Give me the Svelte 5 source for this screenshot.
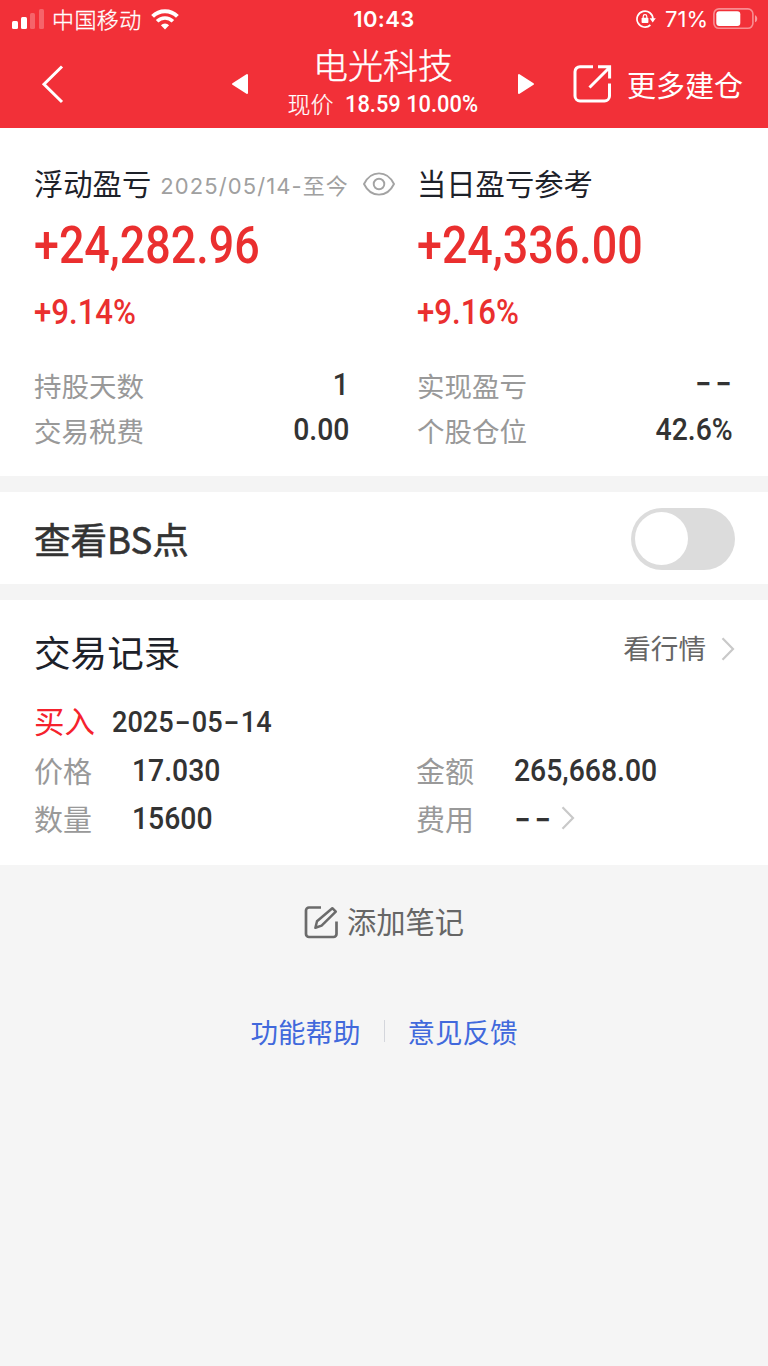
<script lang="ts">
  interface Summary {
    title: string;
    range?: string;
    amount: string;
    percent: string;
    rows: { label: string; value: string }[];
  }

  const summaries: Summary[] = [
    {
      title: '浮动盈亏',
      range: '2025/05/14-至今',
      amount: '+24,282.96',
      percent: '+9.14%',
      rows: [
        { label: '持股天数', value: '1' },
        { label: '交易税费', value: '0.00' }
      ]
    },
    {
      title: '当日盈亏参考',
      amount: '+24,336.00',
      percent: '+9.16%',
      rows: [
        { label: '实现盈亏', value: '--' },
        { label: '个股仓位', value: '42.6%' }
      ]
    }
  ];

  const trade = {
    side: '买入',
    date: ['2025', '05', '14'],
    fields: [
      { label: '价格', value: '17.030' },
      { label: '金额', value: '265,668.00' },
      { label: '数量', value: '15600' },
      { label: '费用', value: '--', link: true }
    ]
  };

  let showPoints = $state(false);
</script>

<div class="page">
  <header>
    <div class="status">
      <div class="carrier">
        <svg width="32" height="20" viewBox="0 0 32 20" fill="#fff">
          <rect x="0" y="12" width="6" height="8" rx="1.5" />
          <rect x="9" y="8" width="6" height="12" rx="1.5" />
          <rect x="18" y="4" width="5" height="16" rx="1.5" opacity=".25" />
          <rect x="27" y="0" width="5" height="20" rx="1.5" opacity=".25" />
        </svg>
        <span>中国移动</span>
        <svg class="wifi" width="28" height="21" viewBox="0 0 28 21" fill="none" stroke="#fff" stroke-width="4">
          <path d="M1.6 7.4a17.6 17.6 0 0 1 24.8 0" />
          <path d="M6.1 12.3a11.2 11.2 0 0 1 15.8 0" stroke-width="3.6" />
          <path d="M14 20.5l-4.1-4.2a5.8 5.8 0 0 1 8.2 0z" fill="#fff" stroke="none" />
        </svg>
      </div>
      <div class="clock">10:43</div>
      <div class="power">
        <svg width="20" height="18" viewBox="0 0 20 18" fill="none" stroke="#fff">
          <path d="M14.4 15A8 8 0 1 1 17 9" stroke-width="1.7" />
          <path d="M13.6 8.2h6.2l-3.1 4.2z" fill="#fff" stroke="none" />
          <rect x="5.6" y="7.8" width="6.8" height="5.2" rx=".8" fill="#fff" stroke="none" />
          <path d="M7.2 8V6.4a1.8 1.8 0 0 1 3.6 0V8" stroke-width="1.2" />
        </svg>
        <span>71%</span>
        <svg width="45" height="22" viewBox="0 0 45 22">
          <rect x=".9" y=".9" width="39" height="19.4" rx="5" fill="none" stroke="#fff" stroke-width="1.6" opacity=".45" />
          <rect x="3.3" y="3.3" width="24" height="14.6" rx="3" fill="#fff" />
          <path d="M42 7.2c3 1 3 6 0 7z" fill="#fff" opacity=".5" />
        </svg>
      </div>
    </div>

    <div class="nav">
      <svg class="back" width="24" height="40" viewBox="0 0 24 40" fill="none" stroke="#fff" stroke-width="3">
        <path d="M21 2.5L3 20.3 21 38" />
      </svg>
      <div class="stock">
        <svg width="18" height="22" viewBox="0 0 18 22"><path d="M2 11L16 2v18z" fill="#fff" stroke="#fff" stroke-width="2" stroke-linejoin="round" /></svg>
        <div class="quote">
          <h1>电光科技</h1>
          <p><span>现价</span><span class="num">18.59 10.00%</span></p>
        </div>
        <svg width="18" height="22" viewBox="0 0 18 22"><path d="M16 11L2 2v18z" fill="#fff" stroke="#fff" stroke-width="2" stroke-linejoin="round" /></svg>
      </div>
      <div class="more">
        <svg width="40" height="40" viewBox="0 0 40 40" fill="none" stroke="#fff" stroke-width="3">
          <path d="M20 2.7H7a5 5 0 0 0-5 5V32a5 5 0 0 0 5 5h24.5a5 5 0 0 0 5-5V19.5" />
          <path d="M16.5 23.5L36 4M25 2.7h11.6V14.5" />
        </svg>
        <span>更多建仓</span>
      </div>
    </div>
  </header>

  <section class="profit">
    {#each summaries as item}
      <div class="summary">
        <div class="title">
          <h2>{item.title}</h2>
          {#if item.range}
            <span class="range">{item.range}</span>
            <svg width="32" height="24" viewBox="0 0 32 24" fill="none" stroke="#a3a3a3" stroke-width="1.9">
              <path d="M1 12C8-2.2 24-2.2 31 12 24 26.2 8 26.2 1 12z" />
              <circle cx="16" cy="12" r="5.3" />
            </svg>
          {/if}
        </div>
        <div class="amount num">{item.amount}</div>
        <div class="percent num">{item.percent}</div>
        {#each item.rows as row}
          <div class="row">
            <span class="label">{row.label}</span>
            <span class="value num" class:dash={row.value === '--'}>{row.value}</span>
          </div>
        {/each}
      </div>
    {/each}
  </section>

  <section class="points">
    <h2>查看BS点</h2>
    <button class="switch" class:on={showPoints} aria-label="查看BS点" onclick={() => (showPoints = !showPoints)}>
      <span class="knob"></span>
    </button>
  </section>

  <section class="records">
    <div class="records-head">
      <h2>交易记录</h2>
      <div class="market">
        <span>看行情</span>
        {@render chevron()}
      </div>
    </div>
    <div class="deal">
      <span class="side">{trade.side}</span>
      <span class="date num">{#each trade.date as part, i}{#if i}<i>-</i>{/if}{part}{/each}</span>
    </div>
    <div class="fields">
      {#each trade.fields as field}
        <div class="field">
          <span class="label">{field.label}</span>
          <span class="value num" class:dash={field.value === '--'}>{field.value}</span>
          {#if field.link}
            {@render chevron()}
          {/if}
        </div>
      {/each}
    </div>
  </section>

  <div class="note">
    <svg width="34" height="34" viewBox="0 0 34 34" fill="none" stroke="#6b6b6b" stroke-width="2.7" stroke-linejoin="round">
      <path d="M17 2.5H5a3 3 0 0 0-3 3V29a3 3 0 0 0 3 3h24.5a3 3 0 0 0 3-3V16.500" />
      <path d="M28.300 3.200l3.500 3.500L17.600 20.600l-6.200 2.200 1.600-6.600z" stroke-width="2.5" />
    </svg>
    <span>添加笔记</span>
  </div>

  <footer>
    <span>功能帮助</span>
    <span class="divider"></span>
    <span>意见反馈</span>
  </footer>
</div>

{#snippet chevron()}
  <svg class="chevron" width="14" height="24" viewBox="0 0 14 24" fill="none" stroke="#c9c9c9" stroke-width="2.2">
    <path d="M1.5 1.2L12 12 1.5 22.8" />
  </svg>
{/snippet}

<style>
  :global(body) {
    background: #f5f5f5;
  }

  .page {
    width: 768px;
    min-height: 1366px;
    font-family: 'Noto Sans CJK SC', sans-serif;
    color: #333;
    background: #f5f5f5;
    overflow: hidden;
  }

  h1, h2, p {
    margin: 0;
    font-weight: 400;
  }

  span, h1, h2, p {
    white-space: nowrap;
  }

  svg {
    flex: none;
    display: block;
  }

  /* condensed figures, narrowed from their left edge */
  .num {
    font-family: Roboto, sans-serif;
    font-weight: 500;
    transform: scaleX(0.9);
    transform-origin: left center;
  }

  header {
    height: 128px;
    color: #fff;
    background: #f23038;
  }

  .status {
    display: grid;
    grid-template-columns: 1fr auto 1fr;
    align-items: center;
    height: 38px;
    padding: 0 10px 0 12px;
    font-size: 22px;
    line-height: 38px;
  }

  .carrier,
  .power {
    display: flex;
    align-items: center;
    height: 38px;
  }

  .carrier span {
    margin-left: 8px;
    padding-bottom: 2px;
    letter-spacing: 0.4px;
    font-weight: 300;
    -webkit-text-stroke: 0.3px #fff;
  }

  .wifi {
    margin-left: 9px;
  }

  .clock {
    margin-right: 2px;
    font-family: Inter, sans-serif;
    font-weight: 600;
    letter-spacing: 0.4px;
  }

  .power {
    justify-content: flex-end;
    font-family: Inter, sans-serif;
  }

  .power span {
    margin: 0 5px 0 9px;
  }

  .nav {
    display: grid;
    grid-template-columns: 200px 1fr 200px;
    align-items: center;
    height: 92px;
    padding: 0 25px 0 41px;
  }

  .stock {
    display: flex;
    align-items: center;
    justify-content: space-between;
    margin: 0 8px 0 -10px;
  }

  .quote {
    padding-bottom: 4px;
    text-align: center;
  }

  h1 {
    font-size: 35px;
    font-weight: 300;
    line-height: 44px;
    -webkit-text-stroke: 0.4px #fff;
  }

  .quote p {
    display: flex;
    justify-content: center;
    font-size: 23px;
    font-weight: 300;
    line-height: 34px;
    -webkit-text-stroke: 0.2px #fff;
  }

  .quote .num {
    margin: 0 -7px 0 12px;
    padding-top: 2px;
    transform: scaleX(0.95);
    -webkit-text-stroke: 0;
  }

  .more {
    display: flex;
    align-items: center;
    justify-content: flex-end;
    gap: 14px;
    font-size: 29px;
  }

  .more span {
    padding-bottom: 1px;
  }

  .profit {
    display: grid;
    grid-template-columns: 383px 1fr;
    height: 348px;
    padding: 0 35px 0 34px;
    box-sizing: border-box;
    background: #fff;
  }

  .summary {
    padding-top: 34px;
  }

  .title {
    display: flex;
    align-items: center;
    height: 44px;
    color: #1d2129;
  }

  .title h2 {
    padding-bottom: 4px;
    font-size: 29.3px;
  }

  .range {
    margin: 0 14px 0 9px;
    font-family: Inter, 'Noto Sans CJK SC', sans-serif;
    font-size: 22px;
    letter-spacing: 1.1px;
    color: #a0a0a0;
  }

  .amount {
    height: 76px;
    font-size: 52px;
    line-height: 80px;
    color: #ea2f2f;
    transform: scaleX(0.862);
  }

  .percent {
    height: 80px;
    font-size: 35px;
    line-height: 62px;
    color: #ea2f2f;
    transform: scaleX(0.89);
  }

  .row {
    display: flex;
    align-items: center;
    justify-content: space-between;
    height: 45px;
  }

  .summary:first-child .row {
    width: 315px;
  }

  .row .num {
    transform-origin: right center;
  }

  .label {
    padding-top: 1px;
    font-size: 27.5px;
    color: #999;
  }

  .value {
    font-size: 31.5px;
  }

  .dash {
    font-family: Inter, sans-serif;
    font-size: 36px;
    letter-spacing: 3px;
    transform: scaleX(1.03);
  }

  .row .dash {
    margin-right: -2px;
    padding-bottom: 5px;
  }

  .points {
    display: flex;
    align-items: center;
    justify-content: space-between;
    height: 92px;
    padding: 0 33px 0 34px;
    border: solid #f4f4f4;
    border-width: 16px 0;
    background: #fff;
  }

  .points h2 {
    font-size: 36.5px;
    -webkit-text-stroke: 0.6px #333;
  }

  .switch {
    width: 104px;
    height: 62px;
    margin-top: 1px;
    padding: 4px;
    border: 0;
    border-radius: 31px;
    background: #dcdcdc;
  }

  .knob {
    display: block;
    width: 53px;
    height: 53px;
    border-radius: 50%;
    background: #fff;
  }

  .switch.on {
    background: #f23038;
  }

  .switch.on .knob {
    margin-left: auto;
  }

  .records {
    height: 265px;
    padding: 0 33px 0 34px;
    box-sizing: border-box;
    background: #fff;
  }

  .records-head {
    display: flex;
    align-items: center;
    justify-content: space-between;
    height: 97px;
  }

  .records-head h2 {
    padding-top: 6px;
    font-size: 36.6px;
    color: #1d2129;
  }

  .market {
    display: flex;
    align-items: center;
    gap: 15px;
    font-size: 27.6px;
    color: #666;
  }

  .market span {
    padding-bottom: 4px;
  }

  .deal {
    display: flex;
    align-items: center;
    height: 48px;
    padding-bottom: 1px;
  }

  .side {
    padding-bottom: 2px;
    font-size: 30.5px;
    color: #f5222d;
  }

  .date {
    margin-left: 17px;
    font-size: 29.5px;
    transform: scaleX(0.92);
  }

  .date i {
    display: inline-block;
    margin: 0 3px;
    font-family: Inter, sans-serif;
    font-style: normal;
    transform: scaleX(1.35);
  }

  .fields {
    display: grid;
    grid-template-columns: 382px 1fr;
  }

  .field {
    display: flex;
    align-items: center;
    height: 48px;
  }

  .field .label {
    width: 98px;
    padding-top: 0;
    font-size: 29px;
  }

  .field .chevron {
    margin-left: 8px;
  }

  .note {
    display: flex;
    align-items: center;
    justify-content: center;
    gap: 9px;
    height: 113px;
    font-size: 29.3px;
    color: #666;
  }

  .note span {
    padding-bottom: 3px;
  }

  footer {
    display: flex;
    align-items: center;
    justify-content: center;
    height: 105px;
    font-size: 27.5px;
    color: #4169dc;
  }

  .divider {
    width: 1px;
    height: 22px;
    margin: 0 23px;
    background: #d4d6dc;
  }
</style>
